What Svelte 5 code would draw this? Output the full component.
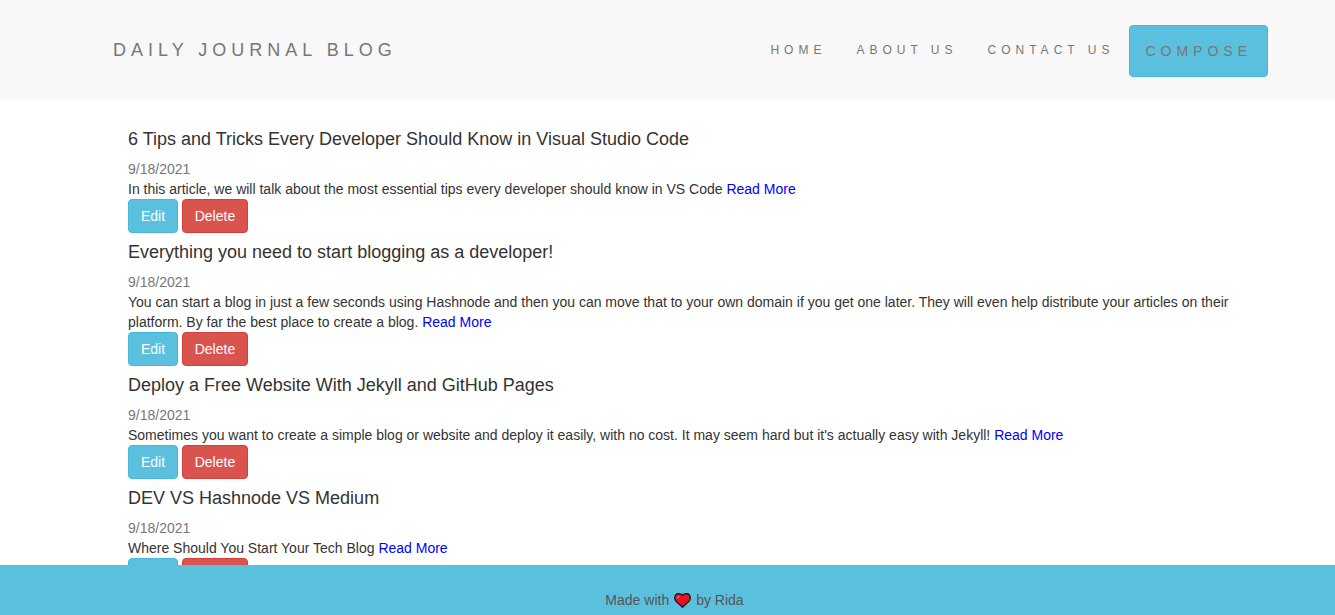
<script>
  const links = ['HOME', 'ABOUT US', 'CONTACT US'];
  const posts = [
    {
      title: '6 Tips and Tricks Every Developer Should Know in Visual Studio Code',
      date: '9/18/2021',
      text: 'In this article, we will talk about the most essential tips every developer should know in VS Code'
    },
    {
      title: 'Everything you need to start blogging as a developer!',
      date: '9/18/2021',
      text: 'You can start a blog in just a few seconds using Hashnode and then you can move that to your own domain if you get one later. They will even help distribute your articles on their platform. By far the best place to create a blog.'
    },
    {
      title: 'Deploy a Free Website With Jekyll and GitHub Pages',
      date: '9/18/2021',
      text: "Sometimes you want to create a simple blog or website and deploy it easily, with no cost. It may seem hard but it's actually easy with Jekyll!"
    },
    {
      title: 'DEV VS Hashnode VS Medium',
      date: '9/18/2021',
      text: 'Where Should You Start Your Tech Blog'
    }
  ];
</script>

<div class="page">
  <header>
    <a class="brand" href="#home">DAILY JOURNAL BLOG</a>
    <nav>
      {#each links as link}
        <a href="#nav">{link}</a>
      {/each}
      <a class="compose" href="#compose">COMPOSE</a>
    </nav>
  </header>

  <main>
    {#each posts as post}
      <article>
        <h4>{post.title}</h4>
        <div class="date">{post.date}</div>
        <p>{post.text} <a href="#post">Read More</a></p>
        <div class="actions">
          <button class="edit">Edit</button>
          <button class="delete">Delete</button>
        </div>
      </article>
    {/each}
  </main>

  <footer>
    <span>Made with</span>
    <svg viewBox="0 0 17 15" width="17" height="15" aria-hidden="true">
      <path d="M8.5 14.2 L1.8 8 Q.7 6.6.7 4.9 Q.9.8 4.8.7 Q7.2.7 8.5 2.4 Q9.8.7 12.2.7 Q16.1.8 16.3 4.9 Q16.3 6.6 15.2 8 Z" fill="#e81224" stroke="#111" stroke-width="1.2" stroke-linejoin="round" />
      <path d="M3.4 5 L5 3.4" fill="none" stroke="#f4706f" stroke-width="1.2" stroke-linecap="round" />
    </svg>
    <span>by Rida</span>
  </footer>
</div>

<style>
  :global(body) {
    margin: 0;
    background: #fff;
  }
  .page {
    height: 615px;
    overflow: hidden;
    display: flex;
    flex-direction: column;
    font: 14px/20px "Liberation Sans", Arial, sans-serif;
    color: #333;
  }
  a {
    text-decoration: none;
  }
  header {
    height: 100px;
    flex: none;
    box-sizing: border-box;
    padding: 25px 67px 0 113px;
    background: #f8f8f8;
    display: flex;
    justify-content: space-between;
    align-items: flex-start;
    letter-spacing: 5px;
  }
  header a {
    color: #777;
    white-space: nowrap;
  }
  .brand {
    font-size: 18px;
    padding: 15px 0;
  }
  nav {
    display: flex;
    align-items: flex-start;
  }
  nav a {
    font-size: 12px;
    padding: 15px;
  }
  nav .compose {
    font-size: 14px;
    background: #5bc0de;
    border: 1px solid #46b8da;
    border-radius: 4px;
  }
  main {
    flex: 1;
    min-height: 0;
    overflow: hidden;
    padding: 20px 97px 0 128px;
  }
  article {
    display: flow-root;
  }
  h4 {
    margin: 10px 0;
    font-size: 18px;
    line-height: 19px;
    font-weight: 400;
  }
  .date {
    color: #777;
  }
  p {
    margin: 0;
  }
  p a {
    color: #00f;
  }
  .actions {
    display: flex;
    gap: 3.6px;
  }
  button {
    font: inherit;
    color: #fff;
    padding: 6px 12px;
    border: 1px solid;
    border-radius: 4px;
  }
  .edit {
    background: #5bc0de;
    border-color: #46b8da;
  }
  .delete {
    background: #d9534f;
    border-color: #d43f3a;
  }
  footer {
    height: 50px;
    flex: none;
    box-sizing: border-box;
    padding: 25px 0 0 14px;
    background: #5bc0de;
    color: #555;
    display: flex;
    justify-content: center;
    gap: 5px;
  }
  footer svg {
    margin-top: 3px;
  }
</style>
